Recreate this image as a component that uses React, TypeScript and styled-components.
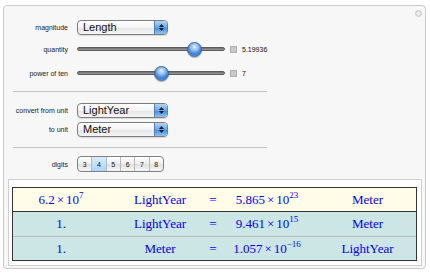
import React from "react";
import styled, { createGlobalStyle } from "styled-components";

const GlobalStyle = createGlobalStyle`
  html, body {
    margin: 0;
    padding: 0;
    background: #ffffff;
  }
  body {
    font-family: "Liberation Sans", Arial, sans-serif;
  }
`;

const Panel = styled.div`
  position: relative;
  box-sizing: border-box;
  width: 423px;
  height: 264px;
  margin: 5px 0 0 3px;
  border: 1px solid #c9c9c9;
  border-radius: 4px;
  background: #f7f7f7;
  display: flex;
  flex-direction: column;
`;

const CloseButton = styled.span`
  position: absolute;
  top: 4px;
  right: 3px;
  width: 7px;
  height: 7px;
  box-sizing: border-box;
  border-radius: 50%;
  border: 1px solid #c6c6c6;
  background: radial-gradient(circle, #f2f2f2 30%, #d8d8d8 70%);
`;

const Row = styled.div<{ $top: number; $h: number }>`
  display: grid;
  grid-template-columns: 64px auto;
  column-gap: 9px;
  align-items: center;
  height: ${(p) => p.$h}px;
  margin-top: ${(p) => p.$top}px;
`;

const Label = styled.span`
  font-size: 7px;
  color: #1a1a1a;
  text-align: right;
  white-space: nowrap;
`;

const Separator = styled.div<{ $top: number }>`
  margin: ${(p) => p.$top}px 0 0 9px;
  width: 254px;
  height: 1px;
  background: #c2c2c2;
`;

const Popup = styled.div`
  box-sizing: border-box;
  width: 91px;
  height: 15px;
  display: flex;
  align-items: stretch;
  border: 1px solid #7d7d7d;
  border-radius: 4px;
  overflow: hidden;
  background: linear-gradient(#ffffff, #f3f3f3 50%, #e4e4e4 51%, #f6f6f6);
  box-shadow: 0 1px 1px rgba(0, 0, 0, 0.12);
`;

const PopupText = styled.span`
  flex: 1;
  padding-left: 5px;
  font-size: 11px;
  line-height: 13px;
  color: #111;
  white-space: nowrap;
`;

const PopupArrows = styled.span`
  width: 12px;
  border-left: 1px solid #4b7fc0;
  background: linear-gradient(#b5d5f7, #6aa5e6 50%, #3f88db 51%, #92c4f3);
  display: flex;
  flex-direction: column;
  align-items: center;
  justify-content: center;
  gap: 1px;
`;

const Slider = styled.div`
  display: flex;
  align-items: center;
  gap: 5px;
`;

const Track = styled.div`
  position: relative;
  box-sizing: border-box;
  width: 148px;
  height: 4px;
  border-radius: 2px;
  border: 1px solid #5c5c5c;
  background: linear-gradient(#6a6a6a, #a0a0a0);
`;

const Thumb = styled.span`
  position: absolute;
  top: 50%;
  width: 15px;
  height: 15px;
  margin-top: -7.5px;
  box-sizing: border-box;
  border-radius: 50%;
  border: 1px solid #2f62a8;
  background: radial-gradient(circle at 50% 30%, #e6f1fd 0%, #8bb8ee 35%, #3c7bd2 65%, #7fb5f0 100%);
  box-shadow: 0 1px 1px rgba(0, 0, 0, 0.3);
`;

const ValueBox = styled.span`
  width: 5px;
  height: 5px;
  background: #c8c8c8;
  border: 1px solid #b0b0b0;
`;

const ValueText = styled.span`
  font-size: 7px;
  color: #111;
`;

const Setter = styled.div`
  box-sizing: border-box;
  display: flex;
  width: 87px;
  height: 16px;
  border: 1px solid #808080;
  border-radius: 4px;
  overflow: hidden;
  background: linear-gradient(#ffffff, #efefef 50%, #e0e0e0 51%, #f6f6f6);
`;

const SetterButton = styled.span<{ $active?: boolean }>`
  flex: 1;
  display: flex;
  align-items: center;
  justify-content: center;
  font-size: 7px;
  color: #111;
  border-left: 1px solid #b8b8b8;
  background: ${(p) => (p.$active ? "linear-gradient(#d8edff, #a9d4fb)" : "transparent")};
  &:first-child {
    border-left: none;
  }
`;

const OutputBox = styled.div`
  box-sizing: border-box;
  margin: 7px 0 0 4px;
  width: 414px;
  height: 87px;
  border: 1px solid #cfcfcf;
  background: #ffffff;
  padding: 7px 0 0 3px;
`;

const Table = styled.div`
  box-sizing: border-box;
  width: 405px;
  border: 1px solid #333333;
  font-family: "Liberation Serif", "Times New Roman", serif;
  font-size: 13px;
  color: #0000ff;
`;

const TableRow = styled.div<{ $bg: string; $line: string; $h: number }>`
  box-sizing: border-box;
  display: grid;
  grid-template-columns: 96px 102px 4px 104px 1fr;
  align-items: center;
  height: ${(p) => p.$h}px;
  background: ${(p) => p.$bg};
  border-top: 1px solid ${(p) => p.$line};
  &:first-child {
    border-top: none;
  }
`;

const Cell = styled.div`
  display: flex;
  justify-content: center;
  white-space: nowrap;
`;

const Times = styled.span`
  margin: 0 2px;
`;

const Sup = styled.sup`
  font-size: 9px;
  line-height: 0;
  vertical-align: 6px;
`;

const Arrows = () => (
  <>
    <svg width="5" height="3" viewBox="0 0 5 3">
      <path d="M0 3 L2.5 0 L5 3 Z" fill="#1d1d1d" />
    </svg>
    <svg width="5" height="3" viewBox="0 0 5 3">
      <path d="M0 0 L2.5 3 L5 0 Z" fill="#1d1d1d" />
    </svg>
  </>
);

const PopupMenu = ({ value }: { value: string }) => (
  <Popup>
    <PopupText>{value}</PopupText>
    <PopupArrows>
      <Arrows />
    </PopupArrows>
  </Popup>
);

const SliderControl = ({ fraction, value }: { fraction: number; value: string }) => (
  <Slider>
    <Track>
      <Thumb style={{ left: `${fraction * (148 - 15)}px` }} />
    </Track>
    <ValueBox />
    <ValueText>{value}</ValueText>
  </Slider>
);

const Sci = ({ m, e }: { m: string; e: string }) => (
  <span>
    {m}
    <Times>×</Times>10<Sup>{e}</Sup>
  </span>
);

const rows = [
  { bg: "#fffde8", line: "#333333", h: 23, a: <Sci m="6.2" e="7" />, from: "LightYear", b: <Sci m="5.865" e="23" />, to: "Meter" },
  { bg: "#cce5e5", line: "#333333", h: 25, a: <span>1.</span>, from: "LightYear", b: <Sci m="9.461" e="15" />, to: "Meter" },
  { bg: "#cce5e5", line: "#bdbdbd", h: 24, a: <span>1.</span>, from: "Meter", b: <Sci m="1.057" e="−16" />, to: "LightYear" },
];

const digits = [3, 4, 5, 6, 7, 8];

export default function App() {
  return (
    <>
      <GlobalStyle />
      <Panel>
        <CloseButton />
        <Row $top={14} $h={15}>
          <Label>magnitude</Label>
          <PopupMenu value="Length" />
        </Row>
        <Row $top={7} $h={14}>
          <Label>quantity</Label>
          <SliderControl fraction={0.816} value="5.19936" />
        </Row>
        <Row $top={10} $h={14}>
          <Label>power of ten</Label>
          <SliderControl fraction={0.568} value="7" />
        </Row>
        <Separator $top={11} />
        <Row $top={11} $h={15}>
          <Label>convert from unit</Label>
          <PopupMenu value="LightYear" />
        </Row>
        <Row $top={4} $h={15}>
          <Label>to unit</Label>
          <PopupMenu value="Meter" />
        </Row>
        <Separator $top={10} />
        <Row $top={8} $h={16}>
          <Label>digits</Label>
          <Setter>
            {digits.map((d) => (
              <SetterButton key={d} $active={d === 4}>
                {d}
              </SetterButton>
            ))}
          </Setter>
        </Row>
        <OutputBox>
          <Table>
            {rows.map((r, i) => (
              <TableRow key={i} $bg={r.bg} $line={r.line} $h={r.h}>
                <Cell>{r.a}</Cell>
                <Cell>{r.from}</Cell>
                <Cell>=</Cell>
                <Cell>{r.b}</Cell>
                <Cell>{r.to}</Cell>
              </TableRow>
            ))}
          </Table>
        </OutputBox>
      </Panel>
    </>
  );
}
